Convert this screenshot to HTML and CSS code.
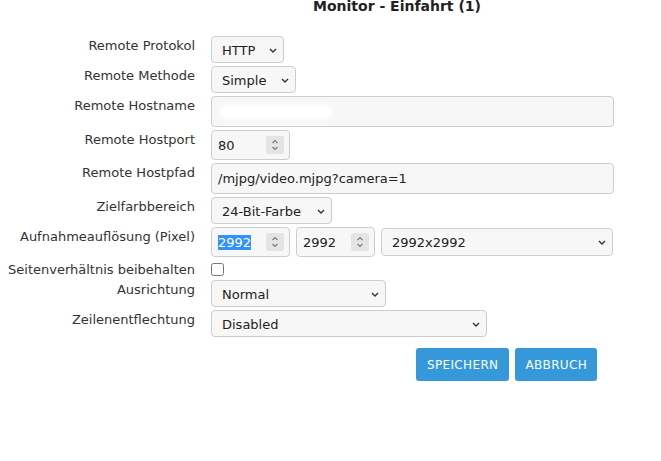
FILE: index.html
```html
<!DOCTYPE html>
<html lang="de">
<head>
<meta charset="utf-8">
<title>Monitor - Einfahrt (1)</title>
<link rel="stylesheet" href="styles.css">
</head>
<body>
<div class="page">
  <h1 class="title">Monitor - Einfahrt (1)</h1>
  <div class="form">
    <div class="lbl">Remote Protokol</div>
    <div class="ctl"><div class="select w-proto"><span>HTTP</span><svg class="chev" width="8" height="5" viewBox="0 0 8 5"><path d="M1 1L4 4L7 1"/></svg></div></div>

    <div class="lbl">Remote Methode</div>
    <div class="ctl"><div class="select w-method"><span>Simple</span><svg class="chev" width="8" height="5" viewBox="0 0 8 5"><path d="M1 1L4 4L7 1"/></svg></div></div>

    <div class="lbl">Remote Hostname</div>
    <div class="ctl"><div class="input tall w-full redacted"><span class="blur"></span></div></div>

    <div class="lbl">Remote Hostport</div>
    <div class="ctl"><div class="input num"><span>80</span><span class="spin"><svg width="8" height="14" viewBox="0 0 8 14"><path d="M1.5 5L4 2.5L6.5 5M1.5 9L4 11.5L6.5 9"/></svg></span></div></div>

    <div class="lbl">Remote Hostpfad</div>
    <div class="ctl"><div class="input tall w-full"><span>/mjpg/video.mjpg?camera=1</span></div></div>

    <div class="lbl">Zielfarbbereich</div>
    <div class="ctl"><div class="select w-color"><span>24-Bit-Farbe</span><svg class="chev" width="8" height="5" viewBox="0 0 8 5"><path d="M1 1L4 4L7 1"/></svg></div></div>

    <div class="lbl">Aufnahmeauflösung (Pixel)</div>
    <div class="ctl res">
      <div class="input num"><span class="sel">2992</span><span class="spin"><svg width="8" height="14" viewBox="0 0 8 14"><path d="M1.5 5L4 2.5L6.5 5M1.5 9L4 11.5L6.5 9"/></svg></span></div>
      <div class="input num"><span>2992</span><span class="spin"><svg width="8" height="14" viewBox="0 0 8 14"><path d="M1.5 5L4 2.5L6.5 5M1.5 9L4 11.5L6.5 9"/></svg></span></div>
      <div class="select w-res"><span>2992x2992</span><svg class="chev" width="8" height="5" viewBox="0 0 8 5"><path d="M1 1L4 4L7 1"/></svg></div>
    </div>

    <div class="lbl">Seitenverhältnis beibehalten</div>
    <div class="ctl check"><input type="checkbox" class="cb"></div>

    <div class="lbl">Ausrichtung</div>
    <div class="ctl"><div class="select w-orient"><span>Normal</span><svg class="chev" width="8" height="5" viewBox="0 0 8 5"><path d="M1 1L4 4L7 1"/></svg></div></div>

    <div class="lbl">Zeilenentflechtung</div>
    <div class="ctl"><div class="select w-deint"><span>Disabled</span><svg class="chev" width="8" height="5" viewBox="0 0 8 5"><path d="M1 1L4 4L7 1"/></svg></div></div>
  </div>
  <div class="buttons">
    <button class="btn btn-save" type="button">SPEICHERN</button>
    <button class="btn btn-cancel" type="button">ABBRUCH</button>
  </div>
</div>
</body>
</html>
```
FILE: styles.css
```css
html, body {
  background: #ffffff;
}
body {
  margin: 0 8px;
  font-family: "DejaVu Sans", Verdana, sans-serif;
  font-size: 13px;
  color: #333333;
  overflow: hidden;
}
.title {
  margin: -2px 0 0;
  padding-left: 133px;
  text-align: center;
  font-size: 14px;
  line-height: 16px;
  font-weight: bold;
  color: #222222;
}
.form {
  margin-top: 22px;
  display: grid;
  grid-template-columns: 187px 1fr;
  column-gap: 16px;
  row-gap: 3px;
}
.lbl {
  text-align: right;
  padding-top: 2px;
  line-height: 15px;
  white-space: nowrap;
  color: #333333;
}
.ctl {
  display: flex;
  align-items: center;
}
.select, .input {
  box-sizing: border-box;
  display: flex;
  align-items: center;
  border: 1px solid #cdcdcd;
  border-radius: 4px;
  background: #f7f7f7;
  color: #222222;
  white-space: nowrap;
}
.select {
  height: 27px;
  justify-content: space-between;
  padding: 1px 6px 0 10px;
}
.chev {
  flex: none;
}
.chev path {
  fill: none;
  stroke: #333333;
  stroke-width: 1.4;
}
.input {
  padding: 0 5px 0 6px;
}
.tall {
  height: 31px;
}
.w-proto { width: 73px; }
.w-method { width: 85px; }
.w-color { width: 121px; }
.w-orient { width: 175px; }
.w-deint { width: 276px; }
.w-res { width: 232px; height: 28px; }
.w-full { width: 403px; }
.num {
  width: 79px;
  height: 30px;
  justify-content: space-between;
}
.spin {
  display: flex;
  align-items: center;
  justify-content: center;
  width: 18px;
  height: 18px;
  background: #e4e4e4;
  border-radius: 2px;
}
.spin path {
  fill: none;
  stroke: #7c7c7c;
  stroke-width: 1.2;
}
.sel {
  background: #3390ff;
  color: #ffffff;
}
.res {
  gap: 6px;
}
.redacted {
  position: relative;
  overflow: hidden;
}
.blur {
  position: absolute;
  left: 7px;
  top: 8px;
  width: 114px;
  height: 14px;
  background: #ffffff;
  border-radius: 7px;
  filter: blur(1.5px);
}
.check {
  height: 17px;
  align-items: flex-start;
}
.cb {
  margin: 3px 0 0;
  width: 13px;
  height: 13px;
}
.buttons {
  display: flex;
  gap: 6px;
  margin-top: 11px;
  padding-left: 408px;
}
.btn {
  height: 33px;
  padding: 0 11px;
  border: none;
  border-radius: 3px;
  background: #3498db;
  color: #ffffff;
  font-family: "DejaVu Sans", Verdana, sans-serif;
  font-size: 12px;
  letter-spacing: 0.35px;
}
.btn-cancel {
  padding: 0 10px;
}
```
